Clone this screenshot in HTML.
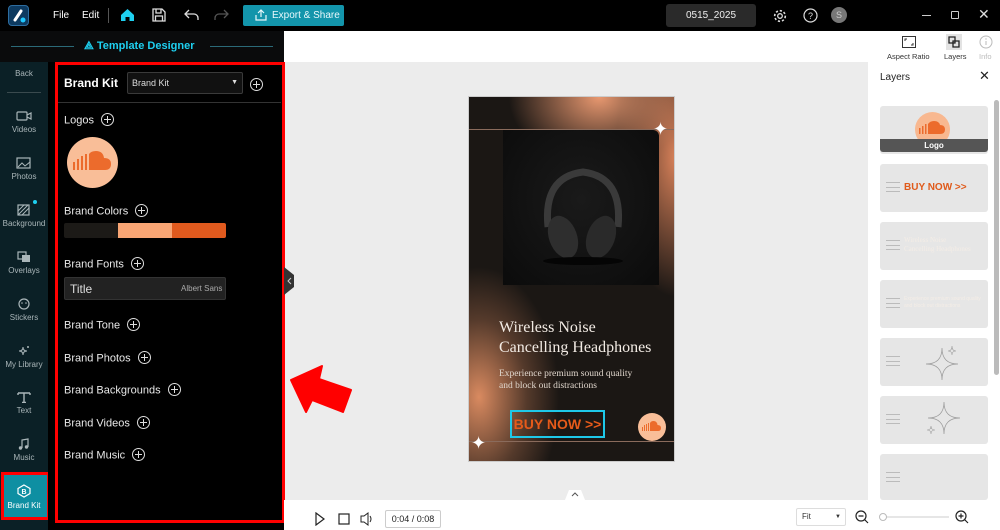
<!DOCTYPE html>
<html><head><meta charset="utf-8"><style>
*{margin:0;padding:0;box-sizing:border-box}
body{width:1000px;height:530px;overflow:hidden;background:#ececec;font-family:"Liberation Sans",sans-serif;position:relative}
.a{position:absolute}
.w{color:#fff}
.side{left:0;top:62px;width:48px;height:468px;background:#0b2026}
.si{position:absolute;left:0;width:48px;text-align:center;color:#aab6b9;font-size:8px}
.si svg{display:block;margin:0 auto 3px}
.lbl{position:absolute;left:64px;color:#e8e8e8;font-size:11px}
.plus{display:inline-block;width:13px;height:13px;border:1px solid #ddd;border-radius:50%;vertical-align:middle;margin-left:7px;position:relative;top:-1px}
.plus:before{content:"";position:absolute;left:2px;top:5px;width:7px;height:1px;background:#ddd}
.plus:after{content:"";position:absolute;left:5px;top:2px;width:1px;height:7px;background:#ddd}
.lay{position:absolute;left:880px;width:108px;height:48px;background:#e6e6e6;border-radius:3px}
.ham{position:absolute;left:6px;top:18px;width:14px;height:10px;border-top:1px solid #bbb;border-bottom:1px solid #bbb}
.ham:after{content:"";position:absolute;left:0;top:3.5px;width:14px;height:1px;background:#bbb}
</style></head><body>
<!-- top bar -->
<div class="a" style="left:0;top:0;width:1000px;height:31px;background:#000"></div>
<div class="a" style="left:8px;top:5px;width:21px;height:21px;border-radius:4px;background:#0d3a60;border:1px solid #2d6da0"><svg width="19" height="19"><path d="M6 14 L12 5" stroke="#fff" stroke-width="3" stroke-linecap="round"/><circle cx="14" cy="14" r="2.5" fill="#1ec8ff"/></svg></div>
<div class="a w" style="left:53px;top:10px;font-size:10px">File</div>
<div class="a w" style="left:82px;top:10px;font-size:10px">Edit</div>
<div class="a" style="left:108px;top:8px;width:1px;height:15px;background:#555"></div>
<svg class="a" style="left:120px;top:8px" width="15" height="14"><path d="M1 7 L7.5 1 L14 7 V13 H9.5 V9 H5.5 V13 H1Z" fill="#1ed0f0"/></svg>
<svg class="a" style="left:152px;top:8px" width="14" height="14"><path d="M1 1 H10 L13 4 V13 H1Z M4 1 V5 H9 V1 M3.5 13 V8 H10.5 V13" fill="none" stroke="#ddd" stroke-width="1.3"/></svg>
<svg class="a" style="left:184px;top:9px" width="15" height="12"><path d="M5 1 L1 5 L5 9 M1 5 H10 A4 4 0 0 1 14 9 V11" fill="none" stroke="#ddd" stroke-width="1.3"/></svg>
<svg class="a" style="left:214px;top:9px" width="15" height="12"><path d="M10 1 L14 5 L10 9 M14 5 H5 A4 4 0 0 0 1 9 V11" fill="none" stroke="#555" stroke-width="1.3"/></svg>
<div class="a" style="left:243px;top:5px;width:101px;height:21px;background:#1395ab;border-radius:2px;color:#e8f8fb;font-size:10px;line-height:21px;padding-left:29px">Export &amp; Share</div>
<svg class="a" style="left:255px;top:9px" width="12" height="12"><path d="M6 8 V1 M3 4 L6 1 L9 4 M1 6 V11 H11 V6" fill="none" stroke="#e8f8fb" stroke-width="1.2"/></svg>
<div class="a" style="left:666px;top:4px;width:90px;height:23px;background:#2a2a2a;border-radius:3px;color:#eee;font-size:10px;line-height:23px;text-align:center">0515_2025</div>
<svg class="a" style="left:773px;top:9px" width="14" height="14"><circle cx="7" cy="7" r="2.3" fill="none" stroke="#ddd" stroke-width="1.3"/><circle cx="7" cy="7" r="5.3" fill="none" stroke="#ddd" stroke-width="1.6" stroke-dasharray="2.2 1.9"/></svg>
<svg class="a" style="left:803px;top:8px" width="15" height="15"><circle cx="7.5" cy="7.5" r="6.5" fill="none" stroke="#ddd" stroke-width="1.2"/><text x="7.5" y="11" font-size="9" fill="#ddd" text-anchor="middle" font-family="Liberation Sans">?</text></svg>
<div class="a" style="left:831px;top:7px;width:16px;height:16px;border-radius:50%;background:#777;color:#ccc;font-size:9px;line-height:16px;text-align:center">S</div>
<div class="a" style="left:922px;top:15px;width:9px;height:1px;background:#ccc"></div>
<div class="a" style="left:951px;top:11px;width:8px;height:8px;border:1px solid #ccc;border-radius:1px"></div>
<div class="a" style="left:978px;top:6px;color:#ddd;font-size:14px">✕</div>
<!-- designer header -->
<div class="a" style="left:0;top:31px;width:284px;height:31px;background:#0a0b0c"></div>
<div class="a" style="left:11px;top:46px;width:63px;height:1px;background:#2b6a78"></div>
<div class="a" style="left:210px;top:46px;width:63px;height:1px;background:#2b6a78"></div>
<div class="a" style="left:84px;top:40px;color:#1ed0f0;font-size:11px;font-weight:bold">⟁ Template Designer</div>
<!-- toolbar -->
<div class="a" style="left:284px;top:31px;width:716px;height:31px;background:#fff"></div>
<svg class="a" style="left:902px;top:36px" width="14" height="12"><rect x="0.5" y="0.5" width="13" height="11" fill="none" stroke="#333"/><path d="M3 5 V3 H5 M11 7 V9 H9" stroke="#333" fill="none"/></svg>
<div class="a" style="left:887px;top:52px;font-size:7.5px;color:#333">Aspect Ratio</div>
<div class="a" style="left:946px;top:34px;width:16px;height:16px;background:#e3e3e3"></div>
<svg class="a" style="left:948px;top:36px" width="12" height="12"><path d="M1 1 H7 V7 H1Z M5 5 H11 V11 H5Z" fill="none" stroke="#222" stroke-width="1.3"/></svg>
<div class="a" style="left:944px;top:52px;font-size:7.5px;color:#333">Layers</div>
<svg class="a" style="left:979px;top:35px" width="14" height="14"><circle cx="7" cy="7" r="6" fill="none" stroke="#bbb"/><path d="M7 6 V10" stroke="#bbb"/><circle cx="7" cy="4" r=".7" fill="#bbb"/></svg>
<div class="a" style="left:979px;top:52px;font-size:7.5px;color:#bbb">Info</div>
<!-- sidebar -->
<div class="a side"></div>
<div class="si" style="top:69px">Back</div>
<div class="a" style="left:7px;top:92px;width:34px;height:1px;background:#3a4a4e"></div>
<div class="si" style="top:110px"><svg width="16" height="12"><rect x="1" y="2" width="10" height="8" rx="1" fill="none" stroke="#aab6b9" stroke-width="1.2"/><path d="M11 5 L15 3 V9 L11 7" fill="none" stroke="#aab6b9" stroke-width="1.2"/></svg>Videos</div>
<div class="si" style="top:157px"><svg width="16" height="12"><rect x="1" y="1" width="13" height="10" fill="none" stroke="#aab6b9" stroke-width="1.2"/><path d="M2 10 L6 6 L9 9 L14 5" fill="none" stroke="#aab6b9"/></svg>Photos</div>
<div class="si" style="top:204px"><svg width="16" height="12"><rect x="2" y="1" width="11" height="10" fill="none" stroke="#aab6b9" stroke-width="1.2"/><path d="M2 7 L8 1 M2 11 L12 1 M6 11 L13 4" stroke="#aab6b9"/></svg>Background</div>
<div class="a" style="left:33px;top:200px;width:4px;height:4px;border-radius:50%;background:#1ed0f0"></div>
<div class="si" style="top:251px"><svg width="16" height="12"><rect x="2" y="1" width="8" height="7" fill="none" stroke="#aab6b9" stroke-width="1.2"/><rect x="6" y="4" width="8" height="7" fill="#aab6b9"/></svg>Overlays</div>
<div class="si" style="top:298px"><svg width="16" height="12"><circle cx="8" cy="6" r="5" fill="none" stroke="#aab6b9" stroke-width="1.2"/><circle cx="6" cy="5" r=".8" fill="#aab6b9"/><circle cx="10" cy="5" r=".8" fill="#aab6b9"/></svg>Stickers</div>
<div class="si" style="top:345px"><svg width="16" height="12"><path d="M7 2 Q7 6 3 6 Q7 6 7 10 Q7 6 11 6 Q7 6 7 2Z" fill="none" stroke="#aab6b9"/><circle cx="12" cy="2" r="1" fill="#aab6b9"/></svg>My Library</div>
<div class="si" style="top:391px"><svg width="16" height="12"><path d="M2 2 H14 M8 2 V12 M2 2 V4 M14 2 V4 M6 11.5 H10" stroke="#aab6b9" stroke-width="1.4" fill="none"/></svg>Text</div>
<div class="si" style="top:438px"><svg width="16" height="12"><path d="M6 10 V2 L12 1 V9" fill="none" stroke="#aab6b9" stroke-width="1.2"/><circle cx="4.5" cy="10" r="1.7" fill="#aab6b9"/><circle cx="10.5" cy="9" r="1.7" fill="#aab6b9"/></svg>Music</div>
<div class="a" style="left:1px;top:472px;width:49px;height:48px;border:3px solid #f00"></div>
<div class="a" style="left:4px;top:475px;width:43px;height:42px;background:#0e8fa2"></div>
<div class="si" style="top:484px;color:#fff"><svg width="16" height="14"><path d="M8 1 L14 4.5 V9.5 L8 13 L2 9.5 V4.5Z" fill="none" stroke="#fff" stroke-width="1.2"/><text x="8" y="10" font-size="7" fill="#fff" text-anchor="middle" font-family="Liberation Sans" font-weight="bold">B</text></svg>Brand Kit</div>
<!-- panel -->
<div class="a" style="left:48px;top:62px;width:236px;height:468px;background:#000"></div>
<div class="a" style="left:55px;top:62px;width:230px;height:461px;border:3px solid #f00"></div>
<div class="a" style="left:58px;top:102px;width:223px;height:1px;background:#333"></div>
<div class="a w" style="left:64px;top:76px;font-size:12px;font-weight:bold">Brand Kit</div>
<div class="a" style="left:127px;top:72px;width:116px;height:22px;background:#111;border:1px solid #3a3a3a;border-radius:2px;color:#ddd;font-size:9px;line-height:20px;padding-left:4px">Brand Kit<span style="position:absolute;right:4px;top:0;font-size:7px">▼</span></div>
<div class="a" style="left:243px;top:77px"><span class="plus"></span></div>
<div class="lbl" style="top:114px">Logos<span class="plus"></span></div>
<div class="a" style="left:67px;top:137px;width:51px;height:51px;border-radius:50%;background:#f9be98"></div>
<svg class="a" style="left:71px;top:148px" width="44" height="28"><g fill="#ec6b2c"><rect x="2" y="14" width="2" height="8"/><rect x="6" y="11" width="2" height="11"/><rect x="10" y="8" width="2" height="14"/><rect x="14" y="6" width="2" height="16"/><path d="M18 22 V6 Q20 3 25 3 Q32 3 33 10 Q40 10 40 16 Q40 22 34 22Z"/></g></svg>
<div class="lbl" style="top:205px">Brand Colors<span class="plus"></span></div>
<div class="a" style="left:64px;top:223px;width:54px;height:15px;background:#1c1a17;border-radius:2px 0 0 2px"></div>
<div class="a" style="left:118px;top:223px;width:54px;height:15px;background:#f8a574"></div>
<div class="a" style="left:172px;top:223px;width:54px;height:15px;background:#e05a1e;border-radius:0 2px 2px 0"></div>
<div class="lbl" style="top:258px">Brand Fonts<span class="plus"></span></div>
<div class="a" style="left:64px;top:277px;width:162px;height:23px;background:#222;border:1px solid #333;border-radius:2px"></div>
<div class="a" style="left:70px;top:282px;color:#ddd;font-size:12px">Title</div>
<div class="a" style="left:181px;top:284px;color:#aaa;font-size:8px">Albert Sans</div>
<div class="lbl" style="top:319px">Brand Tone<span class="plus"></span></div>
<div class="lbl" style="top:352px">Brand Photos<span class="plus"></span></div>
<div class="lbl" style="top:384px">Brand Backgrounds<span class="plus"></span></div>
<div class="lbl" style="top:417px">Brand Videos<span class="plus"></span></div>
<div class="lbl" style="top:449px">Brand Music<span class="plus"></span></div>
<!-- collapse tab -->
<svg class="a" style="left:284px;top:267px" width="12" height="28"><path d="M0 0 L10 8 V20 L0 28Z" fill="#333"/><path d="M7 11 L4 14 L7 17" stroke="#ccc" fill="none"/></svg>
<!-- red arrow -->
<svg class="a" style="left:285px;top:360px" width="72" height="60"><path d="M6 20 L37 6 L34 19 L66 30 L58 52 L27 40 L21 52Z" fill="#f00" stroke="#f00" stroke-width="2" stroke-linejoin="round"/></svg>
<!-- poster -->
<div class="a" style="left:468px;top:96px;width:207px;height:366px;border:1px solid #ccc;overflow:hidden;background:#1b1714">
 <div class="a" style="left:0;top:0;width:207px;height:366px;background:radial-gradient(ellipse 90px 70px at 130px 0px,#e89870,rgba(232,152,112,.4) 60%,transparent 100%),radial-gradient(ellipse 60px 140px at 207px 60px,#d9825a,transparent 100%),radial-gradient(ellipse 80px 130px at 10px 300px,#d98a60,rgba(217,138,96,.3) 60%,transparent 100%)"></div>
 <div class="a" style="left:0;top:32px;width:207px;height:1px;background:#8a6b5c"></div>
 <div class="a" style="left:0;top:344px;width:207px;height:1px;background:#8a6b5c"></div>
 <div class="a" style="left:34px;top:33px;width:156px;height:155px;background:radial-gradient(ellipse at 50% 45%,#1a1a1a,#0b0b0b);border-radius:0 6px 0 0"></div>
 <svg class="a" style="left:64px;top:60px" width="100" height="110"><path d="M15 70 Q10 20 50 15 Q90 20 85 70" fill="none" stroke="#3a3a3a" stroke-width="7"/><ellipse cx="30" cy="80" rx="14" ry="22" fill="#2e2e2e" transform="rotate(-20 30 80)"/><ellipse cx="68" cy="80" rx="14" ry="22" fill="#2a2a2a" transform="rotate(20 68 80)"/><ellipse cx="50" cy="104" rx="40" ry="4" fill="#050505"/></svg>
 <div class="a" style="left:30px;top:221px;color:#f2ebe4;font-family:'Liberation Serif',serif;font-size:16px;line-height:20px">Wireless Noise<br>Cancelling Headphones</div>
 <div class="a" style="left:30px;top:271px;color:#e0d6cc;font-family:'Liberation Serif',serif;font-size:9.5px;line-height:12px">Experience premium sound quality<br>and block out distractions</div>
 <div class="a" style="left:41px;top:313px;width:95px;height:28px;border:2px solid #1ec8e8;color:#e55a1a;font-weight:bold;font-size:14px;line-height:24px;text-align:center">BUY NOW &gt;&gt;</div>
 <div class="a" style="left:169px;top:316px;width:28px;height:28px;border-radius:50%;background:#f9be98"></div>
 <svg class="a" style="left:172px;top:323px" width="22" height="14"><g fill="#ec6b2c"><rect x="1" y="7" width="1" height="4"/><rect x="3" y="5" width="1" height="6"/><rect x="5" y="4" width="1" height="7"/><rect x="7" y="3" width="1" height="8"/><path d="M9 11 V3 Q10 1 12.5 1 Q16 1 16.5 5 Q20 5 20 8 Q20 11 17 11Z"/></g></svg>
 <div class="a" style="left:184px;top:22px;color:#fff;font-size:18px">✦</div>
 <div class="a" style="left:2px;top:336px;color:#fff;font-size:18px">✦</div>
</div>
<!-- right panel -->
<div class="a" style="left:868px;top:62px;width:132px;height:438px;background:#fff"></div>
<div class="a" style="left:880px;top:72px;font-size:10px;color:#222">Layers</div>
<div class="a" style="left:979px;top:68px;font-size:13px;color:#222">✕</div>
<div class="a" style="left:994px;top:100px;width:5px;height:275px;background:#bbb;border-radius:3px"></div>
<div class="lay" style="top:106px"></div>
<div class="a" style="left:915px;top:112px;width:35px;height:35px;border-radius:50%;background:#f8b890"></div>
<svg class="a" style="left:917px;top:120px" width="32" height="16"><g fill="#ec6b2c"><rect x="2" y="8" width="1.5" height="6"/><rect x="5" y="6" width="1.5" height="8"/><rect x="8" y="4" width="1.5" height="10"/><path d="M11 14 V4 Q13 1 17 1 Q22 1 23 5 Q28 5 28 9.5 Q28 14 23 14Z"/></g></svg>
<div class="a" style="left:880px;top:139px;width:108px;height:13px;background:#555;color:#fff;font-size:8px;font-weight:bold;text-align:center;line-height:13px;border-radius:0 0 3px 3px">Logo</div>
<div class="lay" style="top:164px"><div class="ham"></div><div class="a" style="left:24px;top:18px;color:#e05a1a;font-weight:bold;font-size:10px">BUY NOW &gt;&gt;</div></div>
<div class="lay" style="top:222px"><div class="ham"></div><div class="a" style="left:24px;top:14px;color:#f4ede6;font-family:'Liberation Serif',serif;font-size:7px;line-height:9px">Wireless Noise<br>Cancelling Headphones</div></div>
<div class="lay" style="top:280px"><div class="ham"></div><div class="a" style="left:24px;top:16px;color:#f4ede6;font-size:5px;line-height:7px">Experience premium sound quality<br>and block out distractions</div></div>
<div class="lay" style="top:338px"><div class="ham"></div><svg class="a" style="left:42px;top:4px" width="40" height="40"><path d="M20 6 Q20 22 4 22 Q20 22 20 38 Q20 22 36 22 Q20 22 20 6Z" fill="none" stroke="#999" stroke-width=".7"/><path d="M30 4 Q30 9 26 9 Q30 9 30 13 Q30 9 34 9 Q30 9 30 4Z" fill="none" stroke="#999" stroke-width=".6"/></svg></div>
<div class="lay" style="top:396px"><div class="ham"></div><svg class="a" style="left:42px;top:4px" width="40" height="40"><path d="M22 2 Q22 18 6 18 Q22 18 22 34 Q22 18 38 18 Q22 18 22 2Z" fill="none" stroke="#999" stroke-width=".7"/><path d="M9 26 Q9 30 5 30 Q9 30 9 34 Q9 30 13 30 Q9 30 9 26Z" fill="none" stroke="#999" stroke-width=".6"/></svg></div>
<div class="lay" style="top:454px;height:46px"><div class="ham"></div></div>
<!-- bottom bar -->
<div class="a" style="left:284px;top:500px;width:716px;height:30px;background:#fff"></div>
<div class="a" style="left:565px;top:490px;width:20px;height:10px;background:#fff;clip-path:polygon(20% 0,80% 0,100% 100%,0 100%)"></div>
<svg class="a" style="left:569px;top:490px" width="12" height="8"><path d="M3 6 L6 3 L9 6" stroke="#555" fill="none"/></svg>
<svg class="a" style="left:314px;top:512px" width="60" height="14"><path d="M2 1 L10 7 L2 13Z" fill="none" stroke="#222" stroke-width="1.2"/><rect x="25" y="2" width="10" height="10" fill="none" stroke="#222" stroke-width="1.2"/><path d="M47 4 H50 L54 1 V13 L50 10 H47Z M56 4 Q58 7 56 10" fill="none" stroke="#222"/></svg>
<div class="a" style="left:385px;top:510px;width:56px;height:18px;border:1px solid #ccc;border-radius:2px;font-size:9px;line-height:16px;text-align:center;color:#222">0:04 / 0:08</div>
<div class="a" style="left:796px;top:508px;width:50px;height:18px;border:1px solid #ddd;border-radius:2px;font-size:8px;line-height:16px;padding-left:5px;color:#333">Fit<span style="position:absolute;right:4px;font-size:6px">▼</span></div>
<svg class="a" style="left:855px;top:510px" width="120" height="16"><circle cx="6" cy="6" r="5" fill="none" stroke="#222" stroke-width="1.2"/><path d="M9.5 9.5 L13 13 M3.5 6 H8.5" stroke="#222" stroke-width="1.2"/><path d="M28 7 H94" stroke="#ccc"/><circle cx="28" cy="7" r="3.5" fill="#fff" stroke="#bbb"/><circle cx="106" cy="6" r="5" fill="none" stroke="#222" stroke-width="1.2"/><path d="M109.5 9.5 L113 13 M103.5 6 H108.5 M106 3.5 V8.5" stroke="#222" stroke-width="1.2"/></svg>
</body></html>
